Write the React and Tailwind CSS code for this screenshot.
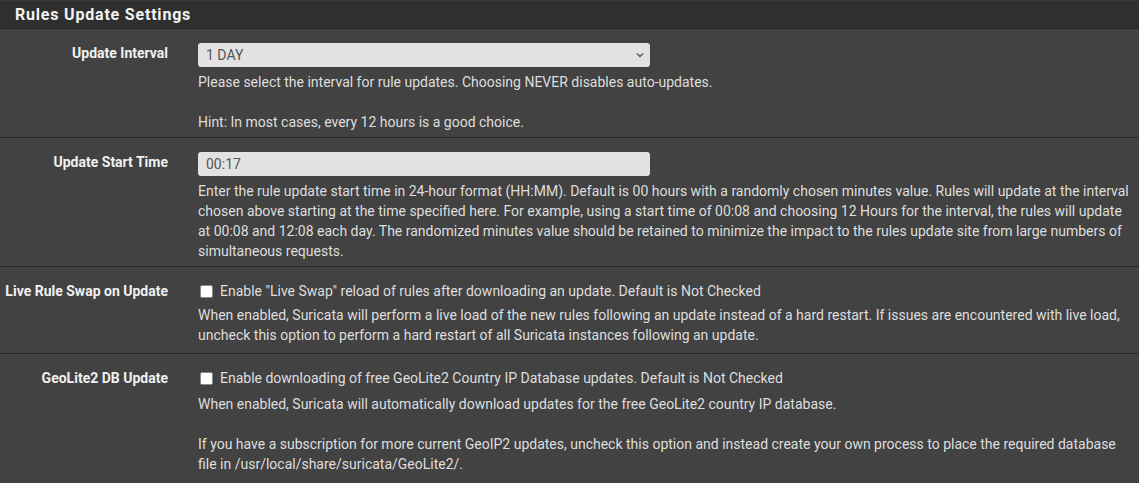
import React from 'react'

function Row({ label, children, last = false }) {
  return (
    <div className={'flex border-b border-[#262626] pt-[14px] ' + (last ? 'pb-[9px]' : 'pb-[5px]')}>
      <div className="w-[183px] shrink-0 pr-[15px] text-right text-[14px] font-bold leading-[20px] text-[#f0f0f0]">
        {label}
      </div>
      <div className="min-w-0 flex-1 pl-[15px] pr-[8px]">{children}</div>
    </div>
  )
}

function Help({ children, className = '' }) {
  return <div className={'text-[14px] leading-[20px] text-[#dedede] ' + className}>{children}</div>
}

function Checkbox({ text }) {
  return (
    <label className="flex h-[21px] items-center text-[14px] text-[#dedede]">
      <span className="ml-[2px] mr-[7px] inline-block h-[13px] w-[13px] rounded-[2px] border-[1.5px] border-[#8a8a8a] bg-white" />
      {text}
    </label>
  )
}

export default function App() {
  return (
    <div className="w-[1139px] bg-[#424242] font-['Roboto','Liberation_Sans',sans-serif]">
      <div className="flex h-[29px] items-center border-t border-[#3a3a3a] border-b border-b-[#242424] bg-[#2f2f2f] px-[15px]">
        <h2 className="text-[16px] font-bold tracking-[0.8px] text-[#f2f2f2]">Rules Update Settings</h2>
      </div>

      <Row label="Update Interval">
        <div className="flex h-[24px] w-[452px] items-center justify-between rounded-[3px] bg-[#e2e2e2] pl-[8px] pr-[5px] text-[14px] text-[#555]">
          <span>1 DAY</span>
          <svg width="10" height="10" viewBox="0 0 10 10" fill="none" stroke="#555" strokeWidth="1.4">
            <path d="M2 3.5 L5 6.5 L8 3.5" />
          </svg>
        </div>
        <Help className="mt-[5px]">
          Please select the interval for rule updates. Choosing NEVER disables auto-updates.
          <br />
          <br />
          Hint: In most cases, every 12 hours is a good choice.
        </Help>
      </Row>

      <Row label="Update Start Time">
        <div className="flex h-[24px] w-[452px] items-center rounded-[3px] bg-[#e2e2e2] pl-[8px] text-[14px] text-[#555]">
          00:17
        </div>
        <Help className="mt-[5px]">
          Enter the rule update start time in 24-hour format (HH:MM). Default is 00 hours with a randomly chosen minutes
          value. Rules will update at the interval chosen above starting at the time specified here. For example, using a
          start time of 00:08 and choosing 12 Hours for the interval, the rules will update at 00:08 and 12:08 each day.
          The randomized minutes value should be retained to minimize the impact to the rules update site from large
          numbers of simultaneous requests.
        </Help>
      </Row>

      <Row label="Live Rule Swap on Update">
        <Checkbox text='Enable "Live Swap" reload of rules after downloading an update. Default is Not Checked' />
        <Help className="mt-[3px] pb-[3px]">
          When enabled, Suricata will perform a live load of the new rules following an update instead of a hard restart.
          If issues are encountered with live load, uncheck this option to perform a hard restart of all Suricata
          instances following an update.
        </Help>
      </Row>

      <Row label="GeoLite2 DB Update" last>
        <Checkbox text="Enable downloading of free GeoLite2 Country IP Database updates. Default is Not Checked" />
        <Help className="mt-[5px]">
          When enabled, Suricata will automatically download updates for the free GeoLite2 country IP database.
          <br />
          <br />
          If you have a subscription for more current GeoIP2 updates, uncheck this option and instead create your own
          process to place the required database file in /usr/local/share/suricata/GeoLite2/.
        </Help>
      </Row>
    </div>
  )
}
